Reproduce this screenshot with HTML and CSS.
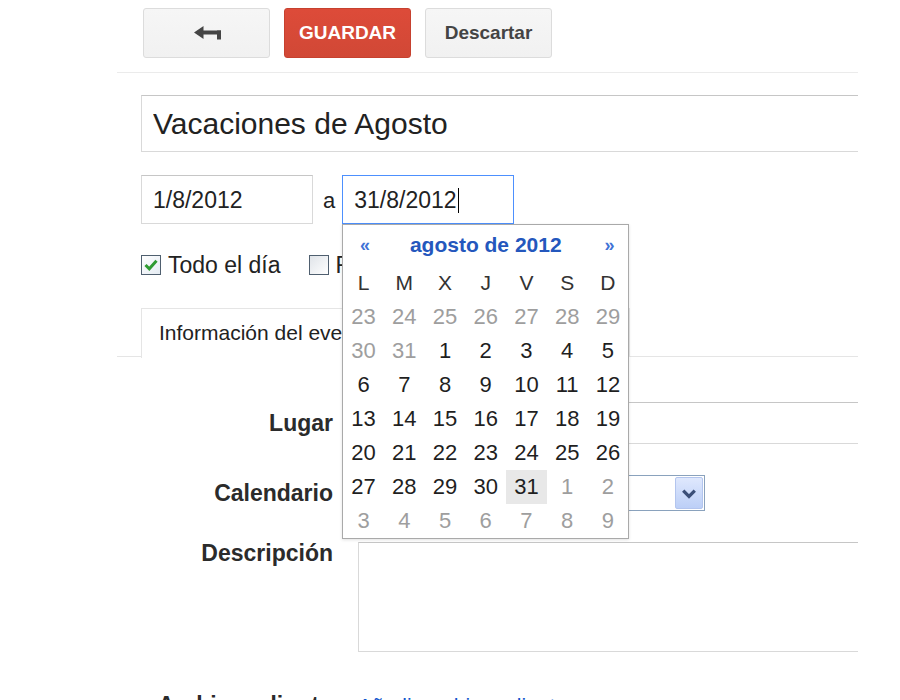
FILE: index.html
```html
<!DOCTYPE html>
<html lang="es">
<head>
<meta charset="utf-8">
<title>Vacaciones de Agosto</title>
<link rel="stylesheet" href="styles.css">
</head>
<body>
<div class="page">
  <div class="toolbar">
    <button class="btn btn-back" aria-label="Volver">
      <svg class="back-icon" width="28" height="14" viewBox="0 0 28 14">
        <polygon points="0,6.5 9.5,0 9.5,13" fill="#454545"/>
        <rect x="8" y="4.5" width="19" height="4" fill="#454545"/>
        <rect x="23" y="4.5" width="4" height="9" fill="#454545"/>
      </svg>
    </button>
    <button class="btn btn-save">GUARDAR</button>
    <button class="btn btn-discard">Descartar</button>
  </div>

  <div class="content">
    <input class="title-input" type="text" value="Vacaciones de Agosto">

    <div class="date-row">
      <div class="date-field">1/8/2012</div>
      <span class="date-sep">a</span>
      <div class="date-wrap">
        <div class="date-field focused">31/8/2012<span class="caret"></span></div>

        <div class="datepicker">
          <div class="dp-head">
            <span class="dp-nav">«</span>
            <span class="dp-title">agosto de 2012</span>
            <span class="dp-nav">»</span>
          </div>
          <div class="dp-dows">
            <span class="dp-dow">L</span><span class="dp-dow">M</span><span class="dp-dow">X</span><span class="dp-dow">J</span><span class="dp-dow">V</span><span class="dp-dow">S</span><span class="dp-dow">D</span>
          </div>
          <div class="dp-grid">
            <span class="dp-day other">23</span><span class="dp-day other">24</span><span class="dp-day other">25</span><span class="dp-day other">26</span><span class="dp-day other">27</span><span class="dp-day other">28</span><span class="dp-day other">29</span>

            <span class="dp-day other">30</span><span class="dp-day other">31</span><span class="dp-day">1</span><span class="dp-day">2</span><span class="dp-day">3</span><span class="dp-day">4</span><span class="dp-day">5</span>

            <span class="dp-day">6</span><span class="dp-day">7</span><span class="dp-day">8</span><span class="dp-day">9</span><span class="dp-day">10</span><span class="dp-day">11</span><span class="dp-day">12</span>

            <span class="dp-day">13</span><span class="dp-day">14</span><span class="dp-day">15</span><span class="dp-day">16</span><span class="dp-day">17</span><span class="dp-day">18</span><span class="dp-day">19</span>

            <span class="dp-day">20</span><span class="dp-day">21</span><span class="dp-day">22</span><span class="dp-day">23</span><span class="dp-day">24</span><span class="dp-day">25</span><span class="dp-day">26</span>

            <span class="dp-day">27</span><span class="dp-day">28</span><span class="dp-day">29</span><span class="dp-day">30</span><span class="dp-day selected">31</span><span class="dp-day other">1</span><span class="dp-day other">2</span>

            <span class="dp-day other">3</span><span class="dp-day other">4</span><span class="dp-day other">5</span><span class="dp-day other">6</span><span class="dp-day other">7</span><span class="dp-day other">8</span><span class="dp-day other">9</span>
          </div>
        </div>
      </div>
    </div>

    <div class="options">
      <label class="option">
        <svg class="checkbox" width="20" height="20" viewBox="0 0 20 20">
          <defs>
            <linearGradient id="cbOn" x1="0" y1="0" x2="1" y2="1">
              <stop offset="0" stop-color="#ffffff"/>
              <stop offset="1" stop-color="#e4ebf2"/>
            </linearGradient>
          </defs>
          <rect x="0.5" y="0.5" width="19" height="19" fill="url(#cbOn)" stroke="#4f5f6f"/>
          <path d="M4.5 10 L8.3 13.8 L15.5 5.8" fill="none" stroke="#2f9b32" stroke-width="3"/>
        </svg>
        <span>Todo el día</span>
      </label>
      <label class="option">
        <svg class="checkbox" width="20" height="20" viewBox="0 0 20 20">
          <defs>
            <linearGradient id="cbOff" x1="0" y1="0" x2="1" y2="1">
              <stop offset="0" stop-color="#dfe3e8"/>
              <stop offset="1" stop-color="#ffffff"/>
            </linearGradient>
          </defs>
          <rect x="0.5" y="0.5" width="19" height="19" fill="url(#cbOff)" stroke="#4f5f6f"/>
        </svg>
        <span>Repetir...</span>
      </label>
    </div>
  </div>

  <div class="tabs">
    <div class="tab active">Información del evento</div>
    <div class="tab inactive"></div>
  </div>

  <div class="form">
    <div class="form-row row-lugar">
      <div class="form-label">Lugar</div>
      <input class="text-input" type="text">
    </div>
    <div class="form-row row-cal">
      <div class="form-label">Calendario</div>
      <div class="select">
        <span class="select-btn">
          <svg width="27" height="31" viewBox="0 0 27 31">
            <path d="M7.5 12.5 L13.5 18.5 L19.5 12.5" fill="none" stroke="#3b4f78" stroke-width="3.4"/>
          </svg>
        </span>
      </div>
    </div>
    <div class="form-row row-desc">
      <div class="form-label label-top">Descripción</div>
      <textarea class="textarea"></textarea>
    </div>
    <div class="form-row row-attach">
      <div class="form-label label-top">Archivo adjunto</div>
      <a class="link" href="#">Añadir archivo adjunto</a>
    </div>
  </div>
</div>
</body>
</html>
```

FILE: styles.css
```css
body {
  margin: 0;
  background: #ffffff;
}

.page {
  width: 741px;
  margin-left: 117px;
  overflow: hidden;
  font-family: "Liberation Sans", Arial, sans-serif;
  color: #222222;
}

/* Toolbar */
.toolbar {
  display: flex;
  gap: 14px;
  padding: 8px 0 14px 26px;
  border-bottom: 1px solid #ebebeb;
}

.btn {
  box-sizing: border-box;
  width: 127px;
  height: 50px;
  border: 1px solid #dcdcdc;
  border-radius: 3px;
  background: linear-gradient(#f6f6f6, #f1f1f1);
  font-family: "Liberation Sans", Arial, sans-serif;
  font-weight: bold;
  font-size: 19px;
  color: #444444;
  padding: 0;
  display: flex;
  align-items: center;
  justify-content: center;
}

.btn-back svg {
  display: block;
  margin-left: 3px;
}

.btn-save {
  background: linear-gradient(#dd4b39, #d14836);
  border-color: #c6412f;
  color: #ffffff;
}

/* Content */
.content {
  padding: 22px 0 0 24px;
}

.title-input {
  box-sizing: border-box;
  display: block;
  width: 760px;
  height: 57px;
  margin: 0;
  padding: 0 0 0 11px;
  border: 1px solid #d9d9d9;
  border-top-color: #c6c6c6;
  font-family: "Liberation Sans", Arial, sans-serif;
  font-size: 30px;
  color: #222222;
  outline: none;
}

.date-row {
  display: flex;
  align-items: center;
  margin-top: 23px;
}

.date-field {
  box-sizing: border-box;
  width: 172px;
  height: 49px;
  padding-left: 11px;
  border: 1px solid #d9d9d9;
  border-top-color: #c6c6c6;
  font-size: 23px;
  line-height: 49px;
  color: #222222;
  white-space: nowrap;
}

.date-field.focused {
  border: 1px solid #4d90fe;
}

.caret {
  display: inline-block;
  width: 1px;
  height: 25px;
  background: #000000;
  vertical-align: -5px;
  margin-left: 1px;
}

.date-sep {
  margin: 2px 7px 0 10px;
  font-size: 22px;
  color: #222222;
}

.date-wrap {
  position: relative;
}

/* Date picker */
.datepicker {
  position: absolute;
  top: 49px;
  left: 0;
  z-index: 10;
  box-sizing: border-box;
  width: 287px;
  border: 1px solid #a9a9a9;
  background: #ffffff;
  box-shadow: 0 1px 3px rgba(0, 0, 0, 0.12);
}

.dp-head {
  display: grid;
  grid-template-columns: 1fr 5fr 1fr;
  align-items: center;
  height: 40px;
}

.dp-nav {
  text-align: center;
  font-size: 18px;
  font-weight: bold;
  color: #3f73d6;
  padding-left: 3px;
}

.dp-title {
  text-align: center;
  font-size: 21px;
  font-weight: bold;
  color: #2457bd;
}

.dp-dows,
.dp-grid {
  display: grid;
  grid-template-columns: repeat(7, 1fr);
}

.dp-dows {
  height: 35px;
}

.dp-grid {
  grid-auto-rows: 34px;
}

.dp-dow {
  display: flex;
  align-items: center;
  justify-content: center;
  font-size: 21px;
  color: #333333;
}

.dp-day {
  display: flex;
  align-items: center;
  justify-content: center;
  font-size: 22px;
  color: #1f1f1f;
}

.dp-day.other {
  color: #9e9e9e;
}

.dp-day.selected {
  background: #e8e8e8;
}

/* Options */
.options {
  display: flex;
  gap: 28px;
  margin-top: 31px;
  height: 20px;
}

.option {
  display: flex;
  align-items: center;
  gap: 7px;
  font-size: 23px;
  color: #222222;
  white-space: nowrap;
}

.checkbox {
  display: block;
  flex: none;
}

/* Tabs */
.tabs {
  display: flex;
  margin-top: 32px;
  padding-left: 24px;
  height: 49px;
  border-bottom: 1px solid #e5e5e5;
}

.tab {
  box-sizing: border-box;
  height: 50px;
  margin-top: 1px;
  padding: 0 17px;
  font-size: 21px;
  line-height: 48px;
  color: #222222;
  border: 1px solid #e5e5e5;
  border-bottom: none;
  white-space: nowrap;
}

.tab.active {
  background: #ffffff;
  position: relative;
}

.tab.inactive {
  width: 241px;
  height: 48px;
  background: #f1f1f1;
  border-left: none;
}

/* Form */
.form {
  padding: 45px 0 0 24px;
}

.form-row {
  display: grid;
  grid-template-columns: 192px 1fr;
  column-gap: 25px;
  align-items: center;
}

.row-cal,
.row-desc {
  margin-top: 31px;
}

.row-attach {
  margin-top: 42px;
  align-items: start;
}

.row-desc {
  align-items: start;
}

.form-label {
  text-align: right;
  font-size: 23px;
  font-weight: bold;
  color: #2b2b2b;
  white-space: nowrap;
}

.label-top {
  line-height: 24px;
  margin-top: -1px;
}

.text-input {
  box-sizing: border-box;
  display: block;
  width: 600px;
  height: 42px;
  margin: 0;
  border: 1px solid #d9d9d9;
  border-top-color: #c6c6c6;
  font-family: "Liberation Sans", Arial, sans-serif;
  font-size: 22px;
  outline: none;
}

.select {
  box-sizing: border-box;
  width: 347px;
  height: 36px;
  border: 1px solid #8aa2bd;
  background: #ffffff;
  display: flex;
  justify-content: flex-end;
  align-items: center;
  padding-right: 1px;
}

.select-btn {
  box-sizing: border-box;
  width: 28px;
  height: 32px;
  border: 1px solid #b3c5ee;
  border-radius: 2px;
  background: linear-gradient(#dfe8fd, #bccff7);
  display: flex;
  align-items: center;
  justify-content: center;
}

.select-btn svg {
  display: block;
}

.textarea {
  box-sizing: border-box;
  display: block;
  width: 600px;
  height: 110px;
  margin: 0;
  border: 1px solid #d9d9d9;
  border-top-color: #c6c6c6;
  resize: none;
  outline: none;
}

.link {
  font-size: 21px;
  line-height: 24px;
  color: #1155cc;
  text-decoration: none;
  white-space: nowrap;
}
```
